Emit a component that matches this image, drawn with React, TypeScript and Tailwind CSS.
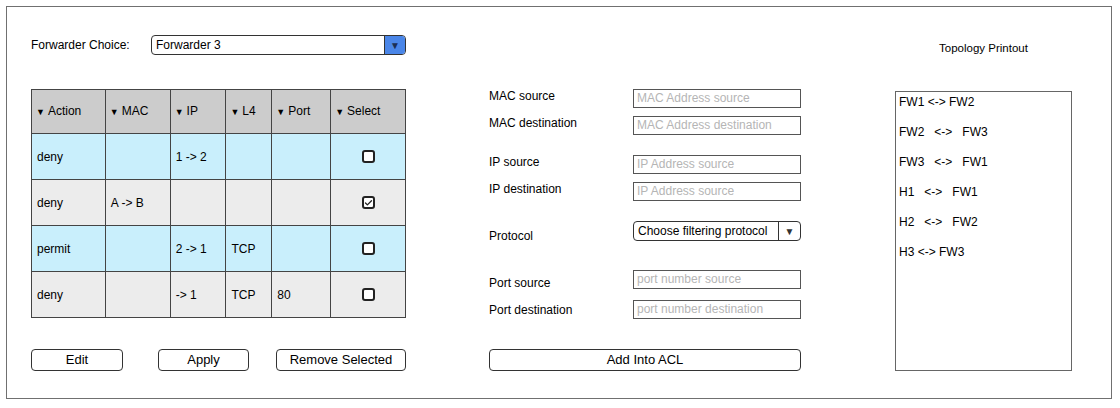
import { Check } from "lucide-react";

const rows = [
  { action: "deny", mac: "", ip: "1 -> 2", l4: "", port: "", checked: false, bg: "bg-[#c9effc]" },
  { action: "deny", mac: "A -> B", ip: "", l4: "", port: "", checked: true, bg: "bg-[#ececec]" },
  { action: "permit", mac: "", ip: "2 -> 1", l4: "TCP", port: "", checked: false, bg: "bg-[#c9effc]" },
  { action: "deny", mac: "", ip: "-> 1", l4: "TCP", port: "80", checked: false, bg: "bg-[#ececec]" },
];

const headers = ["Action", "MAC", "IP", "L4", "Port", "Select"];

const topology = ["FW1 <-> FW2", "FW2   <->   FW3", "FW3   <->   FW1", "H1   <->   FW1", "H2   <->   FW2", "H3 <-> FW3"];

function TextBox({ placeholder }: { placeholder: string }) {
  return (
    <div className="w-[168px] h-[19px] border border-[#555] px-[3px] text-[12px] leading-[17px] text-[#b5b5b5] whitespace-nowrap overflow-hidden">
      {placeholder}
    </div>
  );
}

function Field({
  label,
  placeholder,
  top,
  labelPad,
}: {
  label: string;
  placeholder: string;
  top: string;
  labelPad: string;
}) {
  return (
    <div className={`flex items-start h-[19px] ${top}`}>
      <div className={`w-[144px] text-[12px] leading-[14px] ${labelPad}`}>{label}</div>
      <TextBox placeholder={placeholder} />
    </div>
  );
}

export default function App() {
  return (
    <div className="w-[1120px] h-[408px] bg-white pt-[6px] pl-[6px] font-['Liberation_Sans',Arial,sans-serif] text-black">
      <div className="w-[1106px] h-[393px] border border-[#707070] flex">
        {/* left column */}
        <div className="ml-[24px] w-[375px] flex flex-col">
          <div className="mt-[28px] flex items-center h-[20px]">
            <span className="w-[120px] text-[12px]">Forwarder Choice:</span>
            <div className="flex w-[255px] h-[20px] border border-[#333] rounded-[4px] overflow-hidden">
              <div className="flex-1 px-[4px] text-[12px] leading-[18px]">Forwarder 3</div>
              <div className="w-[21px] bg-[#4a86e8] border-l border-[#333] flex items-center justify-center text-[10px] text-[#1b2f55]">
                ▼
              </div>
            </div>
          </div>

          <table className="mt-[34px] table-fixed border-collapse text-[12px]">
            <colgroup>
              <col className="w-[74px]" />
              <col className="w-[65px]" />
              <col className="w-[56px]" />
              <col className="w-[46px]" />
              <col className="w-[59px]" />
              <col className="w-[75px]" />
            </colgroup>
            <thead>
              <tr className="h-[44px] bg-[#cccccc]">
                {headers.map((h) => (
                  <th key={h} className="border border-[#444] text-left font-normal pl-[4px] pb-[2px] whitespace-nowrap">
                    <span className="text-[9px] mr-[3px]">▼</span>
                    {h}
                  </th>
                ))}
              </tr>
            </thead>
            <tbody>
              {rows.map((r, i) => (
                <tr key={i} className={`h-[46px] ${r.bg}`}>
                  <td className="border border-[#444] pl-[5px]">{r.action}</td>
                  <td className="border border-[#444] pl-[5px]">{r.mac}</td>
                  <td className="border border-[#444] pl-[5px]">{r.ip}</td>
                  <td className="border border-[#444] pl-[5px]">{r.l4}</td>
                  <td className="border border-[#444] pl-[5px]">{r.port}</td>
                  <td className="border border-[#444]">
                    <div className="flex justify-center">
                      <div className="w-[13px] h-[13px] border-2 border-[#222] rounded-[3px] bg-white flex items-center justify-center">
                        {r.checked && <Check size={10} strokeWidth={3.5} className="text-[#222]" />}
                      </div>
                    </div>
                  </td>
                </tr>
              ))}
            </tbody>
          </table>

          <div className="mt-[31px] flex text-[13px]">
            <button className="w-[92px] h-[22px] border border-[#333] rounded-[4px] bg-white">Edit</button>
            <button className="ml-[35px] w-[91px] h-[22px] border border-[#333] rounded-[4px] bg-white">Apply</button>
            <button className="ml-[27px] w-[130px] h-[22px] border border-[#333] rounded-[4px] bg-white">
              Remove Selected
            </button>
          </div>
        </div>

        {/* middle column */}
        <div className="ml-[83px] w-[312px] flex flex-col pt-[82px]">
          <Field label="MAC source" placeholder="MAC Address source" top="" labelPad="" />
          <Field label="MAC destination" placeholder="MAC Address destination" top="mt-[8px]" labelPad="" />
          <Field label="IP source" placeholder="IP Address source" top="mt-[20px]" labelPad="" />
          <Field label="IP destination" placeholder="IP Address source" top="mt-[8px]" labelPad="" />
          <div className="flex items-start h-[20px] mt-[20px]">
            <div className="w-[144px] text-[12px] leading-[14px] pt-[8px]">Protocol</div>
            <div className="flex w-[168px] h-[20px] border border-[#333] rounded-[4px] overflow-hidden">
              <div className="flex-1 px-[4px] text-[12px] leading-[18px]">Choose filtering protocol</div>
              <div className="w-[22px] border-l border-[#333] flex items-center justify-center text-[10px] text-[#333]">▼</div>
            </div>
          </div>
          <Field label="Port source" placeholder="port number source" top="mt-[29px]" labelPad="pt-[6px]" />
          <Field label="Port destination" placeholder="port number destination" top="mt-[11px]" labelPad="pt-[3px]" />
          <button className="mt-[30px] w-[312px] h-[22px] border border-[#333] rounded-[4px] bg-white text-[13px]">
            Add Into ACL
          </button>
        </div>

        {/* right column */}
        <div className="ml-[94px] w-[177px] flex flex-col">
          <div className="mt-[34px] h-[14px] text-[11.5px] leading-[14px] text-center">Topology Printout</div>
          <div className="mt-[36px] h-[280px] border border-[#666] pl-[3px] pt-[3px] text-[12px]">
            {topology.map((t) => (
              <div key={t} className="h-[30px] leading-[14px] whitespace-pre">
                {t}
              </div>
            ))}
          </div>
        </div>
      </div>
    </div>
  );
}
